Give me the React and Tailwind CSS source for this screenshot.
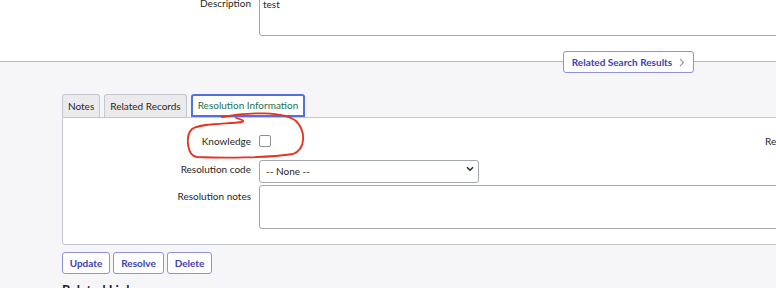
import React from "react";

const Label = ({ children, className = "" }) => (
  <div className={`shrink-0 text-right text-[10px] leading-[14px] text-[#1f1f23] ${className}`}>{children}</div>
);

const Tab = ({ label, active }) => (
  <div
    className={
      active
        ? "h-[23px] px-[5px] flex items-center bg-white border-2 border-[#5270e0] rounded-t-[3px] text-[10px] text-[#23704d]"
        : "h-[23px] px-[5px] flex items-center bg-[#ebebee] border border-[#c3c6cc] border-b-0 rounded-t-[3px] text-[10px] text-[#1f1f23]"
    }
  >
    {label}
  </div>
);

const ActionButton = ({ children, width }) => (
  <button
    className={`${width} h-[22px] bg-white border border-[#8e90e0] rounded-[3px] text-[10px] font-bold text-[#4040b4] flex items-center justify-center`}
  >
    {children}
  </button>
);

export default function App() {
  return (
    <div className="relative w-[776px] h-[288px] overflow-hidden bg-[#f6f6f8] font-['Lato','Noto_Sans',sans-serif]">
      {/* top form area */}
      <div className="flex items-start h-[62px] bg-white border-b border-[#b6b9c1]">
        <div className="flex -mt-[8px]">
          <Label className="w-[251px] pt-[4px]">Description</Label>
          <div className="shrink-0 ml-[8px] w-[560px] h-[44px] border border-[#a3a7ae] rounded-[3px] px-[3px] pt-[4px] text-[10px] leading-[14px] text-[#1f1f23]">
            test
          </div>
        </div>
      </div>

      {/* related search results */}
      <div className="-mt-[11px] ml-[563px] w-[131px] h-[22px] bg-white border border-[#8e90e0] rounded-[3px] flex items-center justify-center gap-[7px] text-[10px] font-bold text-[#4040b4]">
        <span>Related Search Results</span>
        <svg width="6" height="9" viewBox="0 0 6 9" fill="none">
          <path d="M1 1l3.5 3.5L1 8" stroke="#9a9cc8" strokeWidth="1.1" />
        </svg>
      </div>

      {/* tabs */}
      <div className="mt-[21px] ml-[62px] flex items-end gap-[4px]">
        <Tab label="Notes" />
        <Tab label="Related Records" />
        <Tab label="Resolution Information" active />
      </div>

      {/* tab panel */}
      <div className="ml-[62px] w-[760px] bg-white border border-[#c3c6cc] rounded-bl-[3px] pt-[12px] pb-[15px]">
        <div className="h-[22px] flex items-center">
          <div className="shrink-0 w-[702px] flex items-center">
            <Label className="w-[188px]">Knowledge</Label>
            <div className="ml-[8px] w-[12px] h-[12px] border border-[#8a8f97] rounded-[2px] bg-white" />
          </div>
          <span className="whitespace-nowrap text-[10px] text-[#1f1f23]">Resolved by</span>
        </div>

        <div className="mt-[5px] flex items-center">
          <Label className="w-[188px]">Resolution code</Label>
          <div className="relative shrink-0 ml-[8px] w-[220px] h-[23px]">
            <select className="appearance-none w-full h-full border border-[#a3a7ae] rounded-[3px] bg-white pl-[6px] text-[10px] text-[#1f1f23] font-['Lato','Noto_Sans',sans-serif]">
              <option>-- None --</option>
            </select>
            <svg className="absolute right-[5px] top-[9px] pointer-events-none" width="8" height="6" viewBox="0 0 8 6" fill="none">
              <path d="M1 1.2l3 3 3-3" stroke="#222" strokeWidth="1.4" />
            </svg>
          </div>
        </div>

        <div className="mt-[5px] flex">
          <Label className="w-[188px] pt-[4px]">Resolution notes</Label>
          <div className="shrink-0 ml-[8px] w-[560px] h-[44px] border border-[#a3a7ae] rounded-l-[3px] bg-white" />
        </div>
      </div>

      {/* action buttons */}
      <div className="mt-[7px] ml-[62px] flex gap-[3px]">
        <ActionButton width="w-[48px]">Update</ActionButton>
        <ActionButton width="w-[51px]">Resolve</ActionButton>
        <ActionButton width="w-[45px]">Delete</ActionButton>
      </div>

      <div className="mt-[8px] ml-[62px] text-[13px] font-bold text-[#1f1f23] leading-[16px]">Related Links</div>

      {/* red hand-drawn annotation */}
      <svg className="absolute left-0 top-0 pointer-events-none" width="776" height="288" viewBox="0 0 776 288" fill="none">
        <path
          d="M222 117 C 248 112, 284 111, 296 121 C 306 131, 306 149, 293 154 C 268 158, 222 158, 197 157 C 187 156, 185 136, 192 129 C 200 123, 228 124, 242 122 C 246 121, 240 119, 236 118"
          stroke="#e8321f"
          strokeWidth="1.8"
          strokeLinecap="round"
          strokeLinejoin="round"
        />
      </svg>
    </div>
  );
}
